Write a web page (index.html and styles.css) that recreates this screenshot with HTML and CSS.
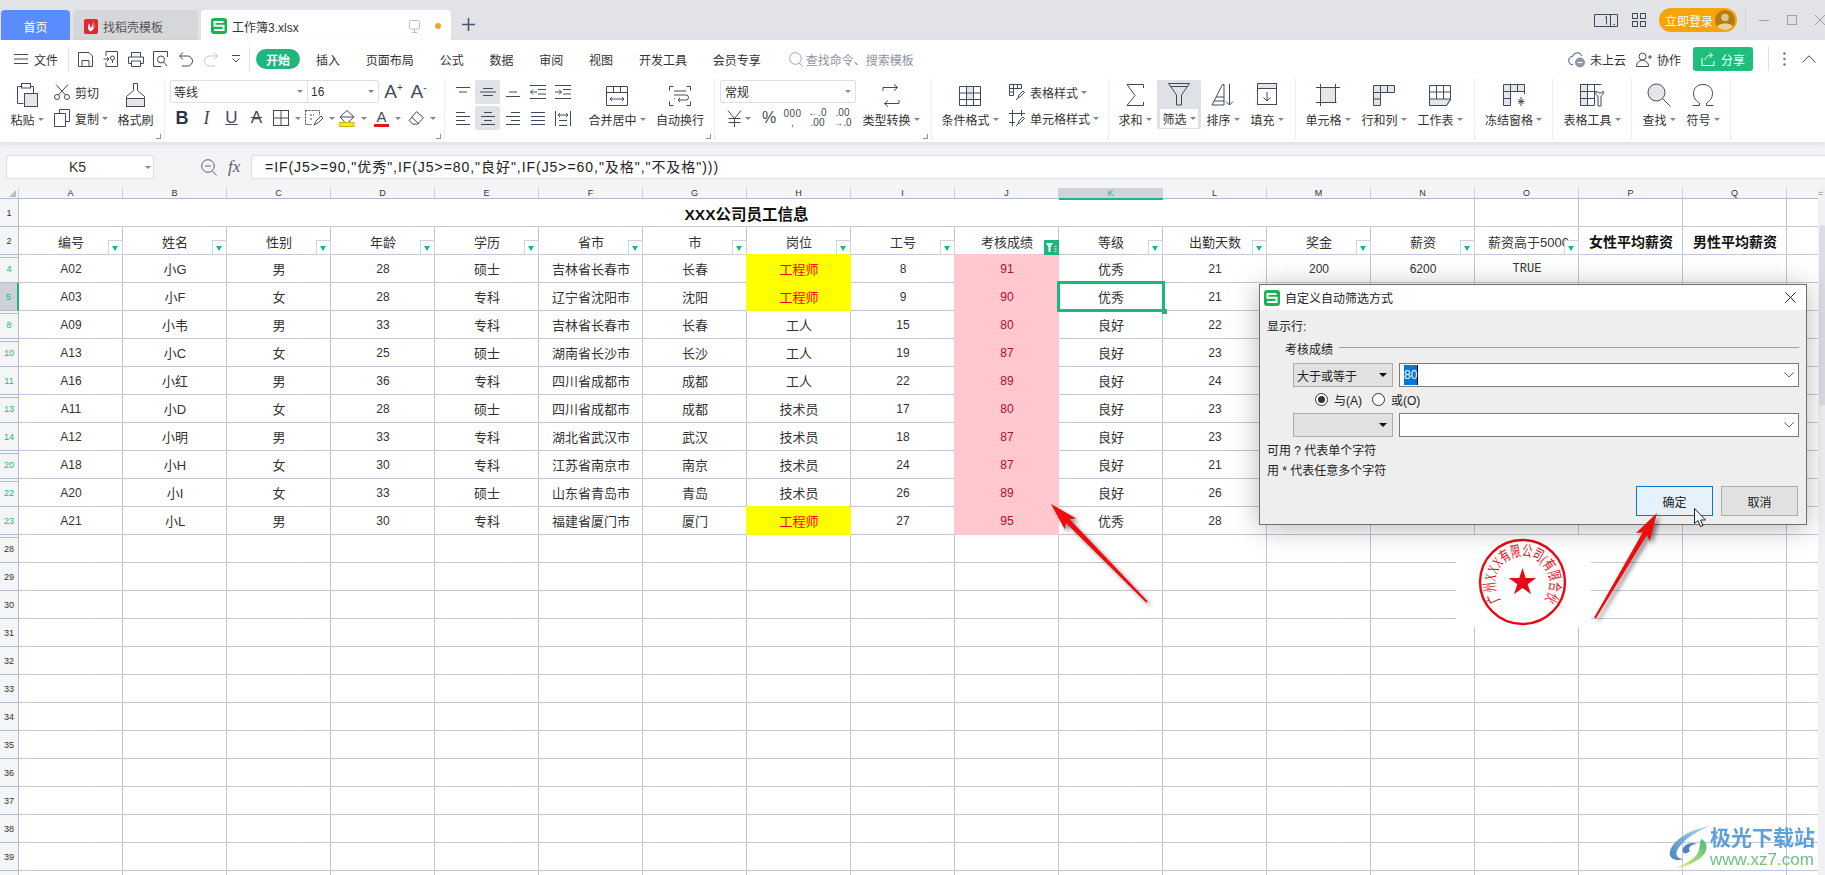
FILE: index.html
```html
<!DOCTYPE html>
<html lang="zh-CN">
<head>
<meta charset="utf-8">
<title>工作簿3.xlsx</title>
<link rel="stylesheet" href="styles.css">
</head>
<body>
<div class="page">
<header class="tabbar">
  <div class="tab home">首页</div>
  <div class="tab doc">
    <svg width="14" height="15" viewBox="0 0 14 15"><rect width="14" height="15" rx="2" fill="#e5262c"/><path d="M9 2C9.5 5 8 7 6.5 9 6 6.5 6 6 5 4.5 3.500 7 3.500 11 6.500 12.500 9 11 11 8 11.500 5.500 10.500 7.500 9.500 8.500 8.500 9.500 9.500 7 10 4.500 9 2Z" fill="#fff"/></svg>
    <span>找稻壳模板</span>
  </div>
  <div class="tab cur">
    <svg width="16" height="16" viewBox="0 0 16 16"><rect width="16" height="16" rx="3" fill="#17b451"/><path d="M12.500 4H3.500V7.800H12.500V12H3" fill="none" stroke="#fff" stroke-width="2"/></svg>
    <span class="curname">工作簿3.xlsx</span>
    <svg class="mon" width="11" height="13" viewBox="0 0 11 13"><rect x=".5" y=".5" width="10" height="8.500" rx="1" fill="none" stroke="#b9bdc6"/><path d="M5.500 9v3M3 12.500h5" stroke="#b9bdc6" fill="none"/></svg>
    <i class="dot"></i>
  </div>
  <svg class="plus" width="13" height="13" viewBox="0 0 13 13"><path d="M6.500 0v13M0 6.500h13" stroke="#4d5670" stroke-width="1.600"/></svg>
  <div class="winbar">
    <svg class="ic" width="24" height="13" viewBox="0 0 24 13"><path d="M23.500 .5H.5v12h23zM16.500 .5v12"/><path d="M11 3.500l1.500-1v8M19.500 10.500h1.500" stroke-width="1"/></svg>
    <svg class="ic gridi" width="14" height="14" viewBox="0 0 14 14"><rect x=".5" y=".5" width="5" height="5"/><rect x="8.500" y=".5" width="5" height="5"/><rect x=".5" y="8.500" width="5" height="5"/><rect x="8.500" y="8.500" width="5" height="5"/></svg>
    <div class="login"><span>立即登录</span>
      <svg width="20" height="20" viewBox="0 0 20 20"><circle cx="10" cy="10" r="10" fill="#b47c12"/><circle cx="10" cy="7.500" r="3.800" fill="#e0c48c"/><path d="M2.500 16.500C4 12.500 16 12.500 17.500 16.500 14 21 6 21 2.500 16.500Z" fill="#e8d3a6"/></svg>
    </div>
    <i class="wsep"></i>
    <svg class="win w1" width="10" height="10" viewBox="0 0 10 10"><path d="M0 5.500h10"/></svg>
    <svg class="win w2" width="10" height="10" viewBox="0 0 10 10"><rect x=".5" y=".5" width="9" height="9"/></svg>
    <svg class="win w3" width="10" height="10" viewBox="0 0 10 10"><path d="M0 0l10 10M10 0L0 10"/></svg>
  </div>
</header>

<section class="ribbon">
  <nav class="menu">
    <svg class="ic ham" width="14" height="10" viewBox="0 0 14 10"><path d="M0 .5h14M0 5h14M0 9.500h14"/></svg>
    <span class="file">文件</span>
    <i class="msep first"></i>
    <div class="qb"><svg class="ic" width="15" height="15" viewBox="0 0 15 15"><path d="M.5.5H11l3.500 3.500v10.500H.5zM4 14.500V8.500h7v6"/></svg></div>
    <div class="qb"><svg class="ic" width="15" height="16" viewBox="0 0 15 16"><path d="M3 .5h11.500v15H3v-4M3 5V.5M.5 8H6M4 6l2 2-2 2"/><circle cx="9.500" cy="7" r="2"/><path d="M9.500 9v3"/></svg></div>
    <div class="qb"><svg class="ic" width="16" height="15" viewBox="0 0 16 15"><path d="M3.500 5V.5h9V5M3.500 11.500h-3V5h15v6.500h-3M3.500 9h9v5.500h-9z"/></svg></div>
    <div class="qb"><svg class="ic" width="15" height="16" viewBox="0 0 15 16"><path d="M14.500 6V.5H.5v15h8"/><circle cx="8" cy="8.500" r="3.500"/><path d="M10.500 11l3.500 4"/></svg></div>
    <div class="qb"><svg class="ic" width="14" height="15" viewBox="0 0 14 15"><path d="M4 .5L.5 4 4 7.500M.5 4h8a5 5 0 010 10H3"/></svg></div>
    <div class="qb"><svg class="ic off" width="14" height="15" viewBox="0 0 14 15"><path d="M10 .5L13.500 4 10 7.500M13.500 4h-8a5 5 0 000 10H11"/></svg></div>
    <div class="qb"><svg class="ic" width="8" height="8" viewBox="0 0 8 8"><path d="M0 .5h8M.5 3.500L4 7l3.500-3.500"/></svg></div>
    <i class="msep second"></i>
    <div class="pill">开始</div>
    <div class="navs">
      <span>插入</span><span>页面布局</span><span>公式</span><span>数据</span><span>审阅</span><span>视图</span><span>开发工具</span><span>会员专享</span>
    </div>
    <svg class="ic search" width="14" height="15" viewBox="0 0 14 15"><circle cx="6.500" cy="6.500" r="5.800"/><path d="M10.500 11l3 3.500"/></svg>
    <span class="searchtxt">查找命令、搜索模板</span>
    <div class="mright">
      <svg width="18" height="17" viewBox="0 0 18 17"><path d="M5 13.500A4 4 0 014.500 5.500 5 5 0 0114 5" fill="none" stroke="#4a5366"/><circle cx="12" cy="11.500" r="5" fill="#8f96a6"/><path d="M9.500 11.500h5" stroke="#fff" stroke-width="1.200"/></svg>
      <span class="mtxt">未上云</span>
      <svg class="ic pers" width="16" height="15" viewBox="0 0 16 15"><circle cx="6.500" cy="4.500" r="3.500"/><path d="M.5 14.500c0-4 2.500-6 6-6s6 2 6 6zM12 5h4M14 3v4"/></svg>
      <span class="mtxt mt2">协作</span>
      <div class="share"><svg width="14" height="14" viewBox="0 0 14 14"><path d="M1 6v7.500h12V9M4 8c1-4 4-5 7-5M8.500 .5L11.500 3 8.500 6" fill="none" stroke="#fff"/></svg><span>分享</span></div>
      <i class="msep third"></i>
      <svg class="dots" width="3" height="14" viewBox="0 0 3 14"><circle cx="1.500" cy="1.500" r="1.200"/><circle cx="1.500" cy="7" r="1.200"/><circle cx="1.500" cy="12.500" r="1.200"/></svg>
      <svg class="ic chev" width="14" height="8" viewBox="0 0 14 8"><path d="M.5 7.500L7 .8l6.500 6.700"/></svg>
    </div>
  </nav>

  <div class="tools">
    <div class="grp g1">
      <div class="big w54">
        <svg class="ic" width="22" height="24" viewBox="0 0 22 24"><path d="M6.500 3.500h-5v17h6M14.500 3.500h3v7"/><rect x="5.500" y=".5" width="9" height="4.500"/><rect x="8.500" y="10.500" width="13" height="13" class="shade"/></svg>
        <span class="lb">粘贴<i class="car"></i></span>
      </div>
      <div class="stack w56">
        <div class="mini"><svg class="ic" width="16" height="16" viewBox="0 0 16 16"><circle cx="3" cy="13" r="2.500"/><circle cx="13" cy="13" r="2.500"/><path d="M4.500 11L14 .5M11.500 11L2 .5"/></svg><span>剪切</span></div>
        <div class="mini"><svg class="ic" width="16" height="18" viewBox="0 0 16 18"><path d="M5.500 4.500V.5h10v12h-4"/><path d="M.5 4.500h11v13H.5z"/></svg><span>复制<i class="car"></i></span></div>
      </div>
      <div class="big w51">
        <svg class="ic" width="19" height="24" viewBox="0 0 19 24"><path d="M7.500.5h4v7l7 6v10H.5v-10l7-6z"/><rect x=".5" y="15.500" width="18" height="8" class="shade"/></svg>
        <span class="lb">格式刷</span>
      </div>
      <i class="corner"></i>
    </div>

    <div class="grp g2">
      <div class="rows">
        <div class="row1">
          <div class="combo fontbox">
            <div class="seg fname"><span>等线</span><i class="car"></i></div>
            <div class="seg fsize"><span>16</span><i class="car"></i></div>
          </div>
          <span class="az">A<sup>+</sup></span><span class="az">A<sup>-</sup></span>
        </div>
        <div class="row2">
          <span class="fb f24 b">B</span>
          <span class="fb f25 it">I</span>
          <span class="fb f25 un">U</span>
          <span class="fb f25 st">A</span>
          <span class="fb f35"><svg class="ic" width="16" height="16" viewBox="0 0 16 16"><rect x=".5" y=".5" width="15" height="15"/><path d="M8 .5v15M.5 8h15"/></svg><i class="car"></i></span>
          <span class="fb f32"><svg class="ic" width="18" height="17" viewBox="0 0 18 17"><path d="M.5.5h14v5M.5.5v14h7M5 5h4M5 9h3" stroke-dasharray="2 1"/><path d="M9 15l2-4 5-5 2 2-5 5z"/></svg><i class="car"></i></span>
          <span class="fb f34"><svg width="16" height="17" viewBox="0 0 16 17"><path d="M8 .5L1 7l5 5.500h3L15 7zM2 7h12" fill="none" stroke="#404859"/><rect x="0" y="12.500" width="15" height="4" fill="#f8e71c" stroke="#c9b90a"/></svg><i class="car"></i></span>
          <span class="fb f35"><span class="ared">A</span><i class="car"></i></span>
          <span class="fb f33"><svg class="ic" width="16" height="14" viewBox="0 0 16 14"><path d="M8.500.7l7 6-6 6.500H5L1 9.500zM4 6.500l7 6.500"/></svg><i class="car"></i></span>
        </div>
      </div>
      <i class="corner"></i>
    </div>

    <div class="grp g3">
      <div class="agrid">
        <span class="ac"><svg class="ic" width="14" height="10" viewBox="0 0 14 10"><path d="M0 .5h14M3 5h8"/></svg></span>
        <span class="ac on"><svg class="ic" width="16" height="10" viewBox="0 0 16 10"><path d="M3 1.500h10M0 5h16M3 8.500h10"/></svg></span>
        <span class="ac"><svg class="ic" width="14" height="10" viewBox="0 0 14 10"><path d="M3 5h8M0 9.500h14"/></svg></span>
        <span class="ac"><svg class="ic" width="16" height="14" viewBox="0 0 16 14"><path d="M0 .5h16M8 4.500h8M8 9h8M0 13.500h16M.5 7H7M3 4.500L.5 7 3 9.500"/></svg></span>
        <span class="ac"><svg class="ic" width="16" height="14" viewBox="0 0 16 14"><path d="M0 .5h16M0 13.500h16M8 4.500h8M8 9h8M0 7h6.500M4 4.500L6.500 7 4 9.500"/></svg></span>
        <span class="ac"><svg class="ic" width="14" height="13" viewBox="0 0 14 13"><path d="M0 .5h9M0 4.500h14M0 8.500h9M0 12.500h14"/></svg></span>
        <span class="ac on"><svg class="ic" width="14" height="13" viewBox="0 0 14 13"><path d="M3 .5h8M0 4.500h14M3 8.500h8M0 12.500h14"/></svg></span>
        <span class="ac"><svg class="ic" width="14" height="13" viewBox="0 0 14 13"><path d="M5 .5h9M0 4.500h14M5 8.500h9M0 12.500h14"/></svg></span>
        <span class="ac"><svg class="ic" width="14" height="13" viewBox="0 0 14 13"><path d="M0 .5h14M0 4.500h14M0 8.500h14M0 12.500h14"/></svg></span>
        <span class="ac"><svg class="ic" width="16" height="15" viewBox="0 0 16 15"><path d="M.5 0v15M15.500 0v15M4 14.500h8M4 9.500h8M3 4h10M5 2L3 4l2 2M11 2l2 2-2 2"/></svg></span>
      </div>
      <div class="big w66">
        <svg class="ic" width="22" height="24" viewBox="0 0 22 24"><path d="M.5 3.500h21v19H.5zM.5 9.500h21M7.500 3.500v6M14.500 3.500v6M4 16h14M6 14l-2 2 2 2M16 14l2 2-2 2"/></svg>
        <span class="lb">合并居中<i class="car"></i></span>
      </div>
      <div class="big w60">
        <svg class="ic" width="22" height="24" viewBox="0 0 22 24"><path d="M4.500 3.500H.5v4M17.500 3.500h4v4M4.500 22.500H.5v-4M17.500 22.500h4v-4M5 8h12M5 12h12a2.500 2.500 0 010 5H9M11 15l-2 2 2 2M5 16h1"/></svg>
        <span class="lb">自动换行</span>
      </div>
      <i class="corner"></i>
    </div>

    <div class="grp g4">
      <div class="rows nrows">
        <div class="row1"><div class="combo numbox"><span>常规</span><i class="car"></i></div></div>
        <div class="row2">
          <span class="nb n38"><svg class="ic yen" width="15" height="17" viewBox="0 0 15 17"><path d="M1 .5l6.500 8 6.500-8M7.500 8.500V17M1.500 8.500h12M1.500 12.500h12"/></svg><i class="car"></i></span>
          <span class="nb n22 pct">%</span>
          <span class="nb n25 thou">000<br>,</span>
          <span class="nb n25 dec">←.0<br>.00</span>
          <span class="nb n25 dec">.00<br>→.0</span>
        </div>
      </div>
      <div class="big w70">
        <svg class="ic" width="20" height="24" viewBox="0 0 20 24"><path d="M2 8V4.500h14M13 1.500l3.500 3-3.500 3M18 17v3.500H4M7 17.500l-3.500 3 3.500 3"/></svg>
        <span class="lb">类型转换<i class="car"></i></span>
      </div>
      <i class="corner"></i>
    </div>

    <div class="grp g5">
      <div class="big w68">
        <svg class="ic" width="22" height="24" viewBox="0 0 22 24"><rect x="8" y="3.500" width="7" height="14" class="shade nost"/><path d="M.5 3.500h21v19H.5zM.5 10h21M.5 16.500h21M7.500 3.500v19M14.500 3.500v19"/></svg>
        <span class="lb">条件格式<i class="car"></i></span>
      </div>
      <div class="stack sty">
        <div class="mini"><svg class="ic" width="16" height="17" viewBox="0 0 16 17"><path d="M.5.5h12v4H4.500v7H.5zM.5 4.500h4M.5 8h4M4.500.5v4M8.500.5v4M9 14l1-3 4-4 1.500 1.500-4 4zM7 16l2-2"/></svg><span>表格样式<i class="car"></i></span></div>
        <div class="mini"><svg class="ic" width="16" height="17" viewBox="0 0 16 17"><path d="M3.500 0v16M12.500 0v6M0 3.500h16M0 12.500h6M9 14l1-3 4-4 1.500 1.500-4 4zM7 16l2-2"/></svg><span>单元格样式<i class="car"></i></span></div>
      </div>
    </div>

    <div class="grp g6">
      <div class="big w44">
        <svg class="ic" width="18" height="24" viewBox="0 0 18 24"><path d="M17.500 5V1.500H1l8 11-8 10h16.500V19"/></svg>
        <span class="lb">求和<i class="car"></i></span>
      </div>
      <div class="big w44 act">
        <svg class="ic" width="22" height="24" viewBox="0 0 22 24"><path d="M.5 1.500h21L13.500 13v10h-5V13zM3 4.500h16"/></svg>
        <span class="lb">筛选<i class="car"></i></span>
      </div>
      <div class="big w44">
        <svg class="ic" width="24" height="24" viewBox="0 0 24 24"><path d="M1 22L11.500 1.500h1.500v20.500zM5 14h8M3 18h10M18.500 1v21M15 18.500l3.500 3.500 3.500-3.500"/></svg>
        <span class="lb">排序<i class="car"></i></span>
      </div>
      <div class="big w44">
        <svg class="ic" width="20" height="24" viewBox="0 0 20 24"><rect x=".5" y=".5" width="19" height="21"/><rect x=".5" y=".5" width="19" height="5" class="shade"/><path d="M10 9v9M6.500 14.500L10 18l3.500-3.500"/></svg>
        <span class="lb">填充<i class="car"></i></span>
      </div>
    </div>

    <div class="grp g7">
      <div class="big w56">
        <svg class="ic" width="24" height="24" viewBox="0 0 24 24"><rect x="4.500" y="4.500" width="15" height="15" class="shade"/><path d="M4.500 1v22M19.500 1v3M0 4.500h24M0 19.500h4M19 19.500h1.500" /></svg>
        <span class="lb">单元格<i class="car"></i></span>
      </div>
      <div class="big w56">
        <svg class="ic" width="22" height="24" viewBox="0 0 22 24"><path class="shade" d="M.5 2.500h21v7H7.500v13H.5z"/><path d="M.5 9.500h7M.5 16h7M7.500 2.500v7M14.500 2.500v7"/></svg>
        <span class="lb">行和列<i class="car"></i></span>
      </div>
      <div class="big w56">
        <svg class="ic" width="22" height="24" viewBox="0 0 22 24"><path d="M.5 2.500h21v14l-4 6H.5zM.5 9h21M7.500 2.500V16M14.500 2.500V16"/><path class="shade" d="M.5 16h21l-4 6.500H.5z"/></svg>
        <span class="lb">工作表<i class="car"></i></span>
      </div>
    </div>

    <div class="grp g8">
      <div class="big w78">
        <svg class="ic" width="22" height="24" viewBox="0 0 22 24"><path class="shade" d="M.5 1.500h21v7H7.500v14H.5z"/><path d="M.5 8.500h21M.5 15.500h7M7.500 1.500v21M14.500 1.500v7M21.500 8v3M15 18.500h6.500M18 14v9M15.500 16l5 5M20.500 16l-5 5"/></svg>
        <span class="lb">冻结窗格<i class="car"></i></span>
      </div>
    </div>

    <div class="grp g9">
      <div class="big w79">
        <svg class="ic" width="24" height="24" viewBox="0 0 24 24"><path class="shade" d="M.5 1.500h7v21H.5z"/><path d="M.5 1.500h21M.5 22.500H14M.5 1.500v21M.5 8.500h14M.5 15.500h14M7.500 1.500v21M14.500 1.500v21"/><path d="M16 8c-1 3 1 5 2 5v10h3V13c1 0 3-2 2-5l-1.500 2h-2.500z" fill="#fff"/></svg>
        <span class="lb">表格工具<i class="car"></i></span>
      </div>
    </div>

    <div class="grp g10">
      <div class="big w44">
        <svg class="ic" width="24" height="24" viewBox="0 0 24 24"><circle cx="9.500" cy="9.500" r="8.500" class="shade"/><path d="M15.500 15.500l8 8"/></svg>
        <span class="lb">查找<i class="car"></i></span>
      </div>
      <div class="big w44">
        <svg class="ic" width="22" height="24" viewBox="0 0 22 24"><path d="M.5 22.500h7V20C4 18 1.500 14.500 1.500 10.500 1.500 5 5.500 1.500 11 1.500S20.500 5 20.500 10.500c0 4-2.500 7.500-6 9.500v2.500h7"/></svg>
        <span class="lb">符号<i class="car"></i></span>
      </div>
    </div>
  </div>
</section>

<section class="fbar">
  <div class="namebox"><span>K5</span><i class="car"></i></div>
  <svg class="ic fzoom" width="16" height="17" viewBox="0 0 16 17"><circle cx="7" cy="7" r="6.300"/><path d="M4 7h6M11.500 12l4 4.500"/></svg>
  <span class="fx">fx</span>
  <div class="finput">=IF(J5&gt;=90,"优秀",IF(J5&gt;=80,"良好",IF(J5&gt;=60,"及格","不及格")))</div>
</section>

<section class="sheet">
  <div class="grid">
    <div class="colhead">
      <div class="corner-cell"><i></i></div>
      <div class="ch">A</div><div class="ch">B</div><div class="ch">C</div><div class="ch">D</div><div class="ch">E</div><div class="ch">F</div><div class="ch">G</div><div class="ch">H</div><div class="ch">I</div><div class="ch">J</div><div class="ch cursel">K</div><div class="ch">L</div><div class="ch">M</div><div class="ch">N</div><div class="ch">O</div><div class="ch">P</div><div class="ch">Q</div>
    </div>
    <div class="row"><div class="rh">1</div><div class="merged">XXX公司员工信息</div></div>
    <div class="row hdr"><div class="rh">2</div>
      <div class="c">编号<i class="fl"></i></div><div class="c">姓名<i class="fl"></i></div><div class="c">性别<i class="fl"></i></div><div class="c">年龄<i class="fl"></i></div><div class="c">学历<i class="fl"></i></div><div class="c">省市<i class="fl"></i></div><div class="c">市<i class="fl"></i></div><div class="c">岗位<i class="fl"></i></div><div class="c">工号<i class="fl"></i></div>
      <div class="c">考核成绩<i class="fla"><svg width="15" height="15" viewBox="0 0 15 15"><path d="M2 3h7L6.500 7v5h-2V7z" fill="#fff"/><path d="M10.500 6.500h2M10.500 9h2M10.500 11.500h2" stroke="#fff"/></svg></i></div>
      <div class="c">等级<i class="fl"></i></div><div class="c">出勤天数<i class="fl"></i></div><div class="c">奖金<i class="fl"></i></div><div class="c">薪资<i class="fl"></i></div>
      <div class="c clip"><span>薪资高于5000</span><i class="fl"></i></div><div class="c bold">女性平均薪资</div><div class="c bold">男性平均薪资</div>
    </div>
    <div class="row"><div class="rh hit hid">4</div><div class="c">A02</div><div class="c">小G</div><div class="c">男</div><div class="c">28</div><div class="c">硕士</div><div class="c">吉林省长春市</div><div class="c">长春</div><div class="c yel">工程师</div><div class="c">8</div><div class="c pink">91</div><div class="c">优秀</div><div class="c">21</div><div class="c">200</div><div class="c">6200</div><div class="c mono">TRUE</div></div>
    <div class="row"><div class="rh hit cursel">5</div><div class="c">A03</div><div class="c">小F</div><div class="c">女</div><div class="c">28</div><div class="c">专科</div><div class="c">辽宁省沈阳市</div><div class="c">沈阳</div><div class="c yel">工程师</div><div class="c">9</div><div class="c pink">90</div><div class="c active">优秀<i class="sel"><i class="handle"></i></i></div><div class="c">21</div></div>
    <div class="row"><div class="rh hit hid">8</div><div class="c">A09</div><div class="c">小韦</div><div class="c">男</div><div class="c">33</div><div class="c">专科</div><div class="c">吉林省长春市</div><div class="c">长春</div><div class="c">工人</div><div class="c">15</div><div class="c pink">80</div><div class="c">良好</div><div class="c">22</div></div>
    <div class="row"><div class="rh hit hid">10</div><div class="c">A13</div><div class="c">小C</div><div class="c">女</div><div class="c">25</div><div class="c">硕士</div><div class="c">湖南省长沙市</div><div class="c">长沙</div><div class="c">工人</div><div class="c">19</div><div class="c pink">87</div><div class="c">良好</div><div class="c">23</div></div>
    <div class="row"><div class="rh hit">11</div><div class="c">A16</div><div class="c">小红</div><div class="c">男</div><div class="c">36</div><div class="c">专科</div><div class="c">四川省成都市</div><div class="c">成都</div><div class="c">工人</div><div class="c">22</div><div class="c pink">89</div><div class="c">良好</div><div class="c">24</div></div>
    <div class="row"><div class="rh hit hid">13</div><div class="c">A11</div><div class="c">小D</div><div class="c">女</div><div class="c">28</div><div class="c">硕士</div><div class="c">四川省成都市</div><div class="c">成都</div><div class="c">技术员</div><div class="c">17</div><div class="c pink">80</div><div class="c">良好</div><div class="c">23</div></div>
    <div class="row"><div class="rh hit">14</div><div class="c">A12</div><div class="c">小明</div><div class="c">男</div><div class="c">33</div><div class="c">专科</div><div class="c">湖北省武汉市</div><div class="c">武汉</div><div class="c">技术员</div><div class="c">18</div><div class="c pink">87</div><div class="c">良好</div><div class="c">23</div></div>
    <div class="row"><div class="rh hit hid">20</div><div class="c">A18</div><div class="c">小H</div><div class="c">女</div><div class="c">30</div><div class="c">专科</div><div class="c">江苏省南京市</div><div class="c">南京</div><div class="c">技术员</div><div class="c">24</div><div class="c pink">87</div><div class="c">良好</div><div class="c">21</div></div>
    <div class="row"><div class="rh hit hid">22</div><div class="c">A20</div><div class="c">小I</div><div class="c">女</div><div class="c">33</div><div class="c">硕士</div><div class="c">山东省青岛市</div><div class="c">青岛</div><div class="c">技术员</div><div class="c">26</div><div class="c pink">89</div><div class="c">良好</div><div class="c">26</div></div>
    <div class="row"><div class="rh hit">23</div><div class="c">A21</div><div class="c">小L</div><div class="c">男</div><div class="c">30</div><div class="c">专科</div><div class="c">福建省厦门市</div><div class="c">厦门</div><div class="c yel">工程师</div><div class="c">27</div><div class="c pink">95</div><div class="c">优秀</div><div class="c">28</div><div class="c">200</div><div class="c">10100</div><div class="c mono">TRUE</div></div>
    <div class="row"><div class="rh hid">28</div></div>
    <div class="row"><div class="rh">29</div></div>
    <div class="row"><div class="rh">30</div></div>
    <div class="row"><div class="rh">31</div></div>
    <div class="row"><div class="rh">32</div></div>
    <div class="row"><div class="rh">33</div></div>
    <div class="row"><div class="rh">34</div></div>
    <div class="row"><div class="rh">35</div></div>
    <div class="row"><div class="rh">36</div></div>
    <div class="row"><div class="rh">37</div></div>
    <div class="row"><div class="rh">38</div></div>
    <div class="row"><div class="rh">39</div></div>
    <div class="row"><div class="rh"></div></div>
  </div>
  <div class="vscroll"><span class="eq">=</span><i class="thumb"></i></div>
</section>

<div class="stamp">
  <svg width="135" height="92" viewBox="0 0 135 92">
    <defs><path id="arc" d="M44.500 65A27.500 27.500 0 1 1 88.500 65"/></defs>
    <ellipse cx="66.500" cy="47" rx="42.500" ry="42" fill="none" stroke="#e60a14" stroke-width="2.400"/>
    <polygon points="66.500,33 69.700,43 80.300,43 71.700,49.200 75,59.200 66.500,53 58,59.200 61.300,49.200 52.700,43 63.300,43" fill="#e60a14"/>
    <text class="stamptxt"><textPath href="#arc" textLength="124" lengthAdjust="spacingAndGlyphs">广州XXX有限公司(有限合伙)</textPath></text>
  </svg>
</div>

<aside class="dialog">
  <div class="dtitle">
    <svg width="16" height="16" viewBox="0 0 16 16"><rect width="16" height="16" rx="3" fill="#17b451"/><path d="M12.500 4H3.500V7.800H12.500V12H3" fill="none" stroke="#fff" stroke-width="2"/></svg>
    <span>自定义自动筛选方式</span>
    <svg class="dclose" width="11" height="11" viewBox="0 0 11 11"><path d="M.5.5l10 10M10.500.5l-10 10" stroke="#222" fill="none"/></svg>
  </div>
  <div class="dbody">
    <div class="dline">显示行:</div>
    <div class="legend"><span>考核成绩</span><i></i></div>
    <div class="frow">
      <div class="dsel"><span>大于或等于</span><i class="tri"></i></div>
      <div class="dinp"><span class="selected">80</span><svg class="dchev" width="10" height="6" viewBox="0 0 10 6"><path d="M.5.5L5 5 9.500.5" fill="none" stroke="#666"/></svg></div>
    </div>
    <div class="radios">
      <i class="radio on"></i><span>与(A)</span>
      <i class="radio"></i><span>或(O)</span>
    </div>
    <div class="frow r2">
      <div class="dsel"><span></span><i class="tri"></i></div>
      <div class="dinp"><span></span><svg class="dchev" width="10" height="6" viewBox="0 0 10 6"><path d="M.5.5L5 5 9.500.5" fill="none" stroke="#666"/></svg></div>
    </div>
    <div class="dline n1">可用 ? 代表单个字符</div>
    <div class="dline n2">用 * 代表任意多个字符</div>
    <div class="btns"><div class="btn ok">确定</div><div class="btn">取消</div></div>
  </div>
</aside>

<svg class="arrows" width="1825" height="875" viewBox="0 0 1825 875">
  <polygon points="1051,504 1064.900,529.600 1066,522.900 1146.300,602.700 1147.700,601.300 1069.600,519.300 1076.300,518.400" fill="#ee0d0d"/>
  <polygon points="1657,513 1649.700,541.200 1647,535 1595.900,618.500 1594.100,617.500 1642.600,532.400 1635.900,533" fill="#ee0d0d"/>
</svg>

<svg class="pointer" width="13" height="19" viewBox="0 0 13 19"><path d="M.5.5v15l3.500-3 2.500 6 2.500-1-2.500-5.500h5z" fill="#fff" stroke="#222"/></svg>

<div class="wm">
  <svg width="43" height="44" viewBox="0 0 43 44">
    <defs>
      <linearGradient id="wb" x1="1" y1="0" x2="0" y2="1"><stop offset="0" stop-color="#a5dcf5"/><stop offset="1" stop-color="#3b74bd"/></linearGradient>
      <linearGradient id="wg" x1="1" y1="0" x2="0" y2="1"><stop offset="0" stop-color="#32b56a"/><stop offset="1" stop-color="#f1ec7a"/></linearGradient>
    </defs>
    <path d="M42 1C23 4 6 14 2 26 0 34 8 37 16 34 8 34 6 28 12 21 19 12 30 6 42 1Z" fill="url(#wb)"/>
    <path d="M15 27C13 21 22 16 29 19 23 19 19 23 22 26 19 29 16 29 15 27Z" fill="#3b74bd"/>
    <path d="M33 14C42 18 40 30 28 36 22 40 14 42 8 44 16 38 30 34 31 24 32 20 32 17 33 14Z" fill="url(#wg)"/>
  </svg>
  <div class="wmt"><b>极光下载站</b><span>www.xz7.com</span></div>
</div>
</div>
</body>
</html>
```
FILE: styles.css
```css
* { box-sizing: border-box; }
html, body { margin: 0; padding: 0; }
body { font-family: "Liberation Sans", "Noto Sans CJK SC", sans-serif; font-size: 12px; color: #333; background: #fff; }
i { font-style: normal; display: block; }
.page { position: relative; width: 1825px; height: 875px; overflow: hidden; display: flex; flex-direction: column; }
.ic { fill: none; stroke: #414a5c; stroke-width: 1; flex: none; display: block; }
.ic.off { stroke: #c3c7cf; }
.shade { fill: #e4e6ea; }
.nost { stroke: none; }
svg { flex: none; }

/* tab bar */
.tabbar { height: 40px; background: #e2e3e7; display: flex; align-items: flex-end; padding-left: 1px; }
.tab { height: 30px; border-radius: 4px 4px 0 0; display: flex; align-items: center; padding-top: 2px; }
.home { width: 69px; background: #5b8cff; color: #fff; justify-content: center; }
.doc { width: 125px; margin-left: 3px; background: #d6d7da; padding-left: 11px; gap: 5px; color: #555; }
.cur { width: 250px; margin-left: 3px; background: #fff; padding-left: 10px; gap: 5px; color: #333; }
.curname { width: 172px; }
.mon { margin-left: 0; }
.dot { width: 6px; height: 6px; border-radius: 50%; background: #f5a623; margin-left: 10px; }
.plus { margin: 0 0 9px 11px; }
.winbar { margin-left: auto; height: 40px; align-self: flex-start; display: flex; align-items: center; width: 231px; }
.gridi { margin-left: 14px; }
.login { width: 80px; height: 24px; margin-left: 13px; border-radius: 12px; background: #f5a50a; color: #fff; display: flex; align-items: center; justify-content: space-between; padding: 0 2px 0 6px; font-size: 12px; }
.wsep { width: 1px; height: 24px; background: #d0d1d6; margin-left: 8px; }
.win { fill: none; stroke: #9aa0ad; }
.w1 { margin-left: 13px; }
.w2 { margin-left: 18px; }
.w3 { margin-left: 18px; }

/* ribbon */
.ribbon { height: 102px; background: #fff; position: relative; z-index: 2; box-shadow: 0 2px 5px rgba(60, 70, 90, .13); }
.menu { height: 38px; display: flex; align-items: center; padding-left: 14px; }
.file { margin-left: 6px; width: 24px; }
.msep { width: 1px; height: 24px; background: #dcdfe4; }
.msep.first { margin: 0 4px 0 10px; }
.msep.second { margin: 0 6px 0 1px; }
.msep.third { margin: 0 14px 0 15px; }
.qb { width: 25px; display: flex; justify-content: center; }
.pill { width: 44px; height: 20px; border-radius: 10px; background: #1fb67e; color: #fff; font-weight: 700; display: flex; align-items: center; justify-content: center; }
.navs { display: flex; gap: 25.8px; margin-left: 16px; }
.search { margin-left: 28px; stroke: #a0a6b2; }
.searchtxt { margin-left: 3px; color: #8d93a1; }
.mright { margin-left: auto; display: flex; align-items: center; width: 257px; }
.mtxt { margin-left: 4px; }
.pers { margin-left: 10px; }
.mt2 { margin-left: 5px; }
.share { width: 60px; height: 24px; margin-left: 12px; background: #1fbe7c; border-radius: 3px; color: #fff; display: flex; align-items: center; justify-content: center; gap: 6px; }
.dots { fill: #6a7284; }
.chev { margin-left: 16px; }

.tools { height: 64px; display: flex; }
.grp { position: relative; display: flex; height: 62px; border-right: 1px solid #eceef1; }
.g1 { width: 165px; }
.g2 { width: 280px; }
.g3 { width: 270px; }
.g4 { width: 217px; }
.g5 { width: 177px; padding-left: 4px; }
.g6 { width: 187px; padding-left: 4px; }
.g7 { width: 179px; padding-left: 4px; }
.g8 { width: 78px; }
.g9 { width: 79px; }
.g10 { width: 99px; padding-left: 5px; }
.corner { position: absolute; right: 3px; bottom: 1px; width: 5px; height: 5px; border-right: 1px solid #8b92a0; border-bottom: 1px solid #8b92a0; }

.big { display: flex; flex-direction: column; align-items: center; padding-top: 5px; }
.big .ic { height: 24px; }
.lb { display: flex; align-items: center; height: 16px; margin-top: 4px; white-space: nowrap; }
.w44 { width: 44px; }
.w51 { width: 51px; }
.w54 { width: 54px; }
.w56 { width: 56px; }
.w60 { width: 60px; }
.w66 { width: 66px; }
.w68 { width: 68px; }
.w70 { width: 70px; }
.w78 { width: 78px; }
.w79 { width: 79px; }
.car { width: 0; height: 0; border-left: 3px solid transparent; border-right: 3px solid transparent; border-top: 3px solid #808794; margin-left: 3px; }
.act { background: #dee1e6; height: 49px; padding-top: 2px; margin-top: 2px; border-radius: 2px; }
.act .lb { background: #fff; width: 38px; height: 19px; margin-top: 3px; justify-content: center; }
.stack { display: flex; flex-direction: column; gap: 2px; padding-top: 2px; }
.mini { height: 24px; display: flex; align-items: center; gap: 5px; white-space: nowrap; }
.mini span { display: flex; align-items: center; }
.sty .mini { padding-left: 5px; }

.rows { display: flex; flex-direction: column; gap: 3px; padding: 2px 0 0 5px; }
.row1 { height: 23px; display: flex; align-items: center; }
.row2 { height: 24px; display: flex; align-items: center; }
.combo { height: 23px; border: 1px solid #dcdfe4; border-radius: 2px; display: flex; align-items: center; }
.fontbox { width: 209px; margin-right: 2px; }
.seg { height: 100%; display: flex; align-items: center; justify-content: space-between; padding: 0 4px 0 3px; }
.fname { width: 137px; border-right: 1px solid #dcdfe4; }
.fsize { flex: 1; }
.az { width: 25px; font-size: 19px; text-align: center; color: #414a5c; line-height: 23px; }
.az sup { font-size: 10px; line-height: 0; vertical-align: 7px; }
.fb { display: flex; align-items: center; justify-content: center; height: 24px; color: #414a5c; }
.f24 { width: 24px; }
.f25 { width: 25px; }
.f32 { width: 32px; }
.f33 { width: 33px; }
.f34 { width: 34px; }
.f35 { width: 35px; }
.fb .car { margin-left: 6px; }
.b { font-size: 18px; font-weight: 700; color: #2c3447; }
.it { font-size: 18px; font-family: "Liberation Serif", serif; font-style: italic; }
.un { font-size: 17px; text-decoration: underline; }
.st { font-size: 17px; text-decoration: line-through; }
.ared { font-size: 15px; line-height: 15px; border-bottom: 3px solid #ef0f17; padding: 0 2px; }
.agrid { display: grid; grid-template-columns: repeat(5, 25px); grid-auto-rows: 24px; row-gap: 2px; padding: 2px 0 0 5px; margin-right: 9px; align-content: start; }
.ac { display: flex; align-items: center; justify-content: center; border-radius: 2px; }
.ac.on { background: #dfe3e7; }
.nrows { width: 141px; }
.numbox { width: 136px; justify-content: space-between; padding: 0 4px 0 4px; }
.nb { display: flex; align-items: center; justify-content: center; height: 24px; text-align: center; color: #414a5c; }
.n22 { width: 22px; }
.n25 { width: 25px; }
.n38 { width: 38px; }
.pct { font-size: 16px; }
.thou { font-size: 10px; line-height: 9px; letter-spacing: .4px; }
.dec { font-size: 10px; line-height: 10px; }

/* formula bar */
.fbar { height: 46px; background: #f3f4f6; display: flex; padding: 13px 0 0 6px; position: relative; }
.namebox { width: 148px; height: 24px; background: #fff; border: 1px solid #dcdfe4; border-radius: 2px; display: flex; align-items: center; font-size: 14px; padding: 0 2px 0 0; }
.namebox span { flex: 1; text-align: center; padding-left: 6px; }
.fzoom { margin: 4px 0 0 47px; stroke: #5a6273; }
.fx { width: 34px; padding-left: 11px; font-family: "Liberation Serif", serif; font-style: italic; font-size: 17px; line-height: 23px; color: #596173; }
.finput { flex: 1; height: 24px; background: #fff; border: 1px solid #dcdfe4; border-right: 0; border-radius: 2px 0 0 2px; padding-left: 13px; font-size: 14px; line-height: 22px; color: #222; letter-spacing: .95px; }

/* sheet */
.sheet { flex: 1; display: flex; min-height: 0; background: #fff; }
.grid { width: 1818px; overflow: hidden; }
.colhead { height: 11px; display: grid; grid-template-columns: 19px repeat(17, 104px) 31px; background: #f4f5f7; border-bottom: 1px solid #b3bbd0; }
.corner-cell { position: relative; border-right: 1px solid #d0d4dc; }
.corner-cell i { position: absolute; right: 2px; bottom: 1px; width: 0; height: 0; border-left: 7px solid transparent; border-bottom: 7px solid #b8bcc5; }
.ch { font-size: 9px; line-height: 10px; text-align: center; color: #333; border-right: 1px solid #ccd1db; }
.ch.cursel { background: #d0d3da; color: #1fb67e; box-shadow: 0 1px 0 #1fb67e, 0 2px 0 #1fb67e; position: relative; }

.row {
  display: grid;
  grid-template-columns: 19px repeat(17, 104px) 31px;
  height: 28px;
  background-color: #fff;
  background-image: linear-gradient(90deg, transparent 103px, #c0c7da 103px), linear-gradient(0deg, #c0c7da 1px, transparent 1px);
  background-size: 104px 100%, 100% 100%;
  background-position: 19px 0, 0 0;
  background-repeat: repeat-x, no-repeat;
}
.rh { position: relative; background: #f4f5f7; border-right: 1px solid #b3bbd0; border-bottom: 1px solid #b3bbd0; font-size: 9px; display: flex; align-items: center; justify-content: center; color: #333; }
.rh.hit { color: #1fb67e; }
.rh.hid::before { content: ""; position: absolute; left: 0; right: 0; top: 2px; height: 1px; background: #b3bbd0; }
.rh.cursel { background: #ced1d8; border-right: 2px solid #1fb67e; }
.merged { grid-column: 2 / span 14; display: flex; align-items: center; justify-content: center; background: #fff; border-right: 1px solid #c0c7da; border-bottom: 1px solid #c0c7da; font-size: 15.500px; font-weight: 700; color: #111; }
.c { position: relative; display: flex; align-items: center; justify-content: center; white-space: nowrap; color: #333; padding-bottom: 1px; font-size: 13px; }
.c:nth-child(2), .c:nth-child(5), .c:nth-child(10), .c:nth-child(11), .c:nth-child(13), .c:nth-child(14), .c:nth-child(15) { font-size: 12px; }
.hdr .c:nth-child(n) { padding-top: 1px; font-size: 13px; }
.clip { justify-content: flex-start; padding-left: 13px; }
.clip span { width: 88px; overflow: hidden; flex: none; }
.hdr .bold:nth-child(n) { font-weight: 700; font-size: 14px; color: #111; }
.mono { font-family: "Liberation Mono", monospace; font-size: 12px; }
.yel { background: #ff0; color: #f00; box-shadow: -1px -1px 0 #ff0; z-index: 1; }
.pink { background: #ffc7ce; color: #a8122a; box-shadow: -1px -1px 0 #ffc7ce; z-index: 1; }
.fl { position: absolute; right: 0; bottom: 0; width: 15px; height: 15px; background: #fff; border: 1px solid #cfd3da; }
.fl::after { content: ""; position: absolute; left: 3px; top: 5px; border-left: 3.500px solid transparent; border-right: 3.500px solid transparent; border-top: 5px solid #1fb67e; }
.fla { position: absolute; right: 0; bottom: 0; width: 15px; height: 15px; background: #1fb67e; z-index: 2; }
.fla svg { display: block; }
.sel { position: absolute; left: -2px; top: -2px; right: -2px; bottom: -1px; border: 3px solid #1fb67e; z-index: 3; }
.handle { position: absolute; right: -5px; bottom: -5px; width: 5px; height: 5px; background: #1fb67e; border: 0; }
.vscroll { position: relative; flex: 1; background: #f0f1f4; }
.eq { position: absolute; left: 0; top: 0; font-size: 9px; line-height: 11px; color: #777; }
.thumb { position: absolute; left: 1px; right: 0; top: 37px; height: 181px; background: #dadde3; border-radius: 2px; }

/* overlays */
.stamp { position: absolute; left: 1456px; top: 535px; width: 135px; height: 92px; background: #fff; z-index: 3; }
.stamp svg { display: block; }
.stamptxt { font-family: "Liberation Serif", "Noto Sans CJK SC", serif; font-size: 15px; fill: #e60a14; }
.dialog { position: absolute; left: 1259px; top: 284px; width: 548px; height: 241px; border: 1px solid #6f6f6f; background: #eee; box-shadow: 0 3px 26px rgba(0, 0, 0, .28); z-index: 4; display: flex; flex-direction: column; color: #222; }
.dtitle { height: 25px; background: #fff; display: flex; align-items: center; padding-left: 4px; gap: 5px; flex: none; }
.dclose { margin-left: auto; margin-right: 10px; }
.dbody { padding: 9px 7px 0 7px; }
.dline { height: 16px; line-height: 16px; }
.legend { height: 16px; margin: 5px 0 0 18px; display: flex; align-items: center; gap: 6px; }
.legend i { flex: 1; height: 1px; background: #a0a0a0; margin-top: -2px; }
.frow { height: 24px; margin: 7px 0 0 26px; display: flex; gap: 6px; }
.frow.r2 { margin-top: 6px; }
.dsel { width: 100px; background: #e1e1e1; border: 1px solid #adadad; display: flex; align-items: center; justify-content: space-between; padding: 0 5px 0 3px; }
.tri { width: 0; height: 0; border-left: 4px solid transparent; border-right: 4px solid transparent; border-top: 4px solid #111; }
.dinp { flex: 1; background: #fff; border: 1px solid #7a7a7a; display: flex; align-items: center; justify-content: space-between; padding: 0 4px 0 4px; }
.selected { background: #0078d7; color: #fff; width: 14px; line-height: 20px; display: block; border-right: 1px solid #000; }
.radios { height: 16px; margin: 4px 0 0 48px; display: flex; align-items: center; }
.radios span { margin: 0 10px 0 6px; }
.radio { width: 13px; height: 13px; border: 1px solid #333; border-radius: 50%; background: #fff; position: relative; }
.radio.on::after { content: ""; position: absolute; left: 2px; top: 2px; width: 7px; height: 7px; border-radius: 50%; background: #333; }
.n1 { margin-top: 6px; }
.n2 { margin-top: 4px; }
.btns { display: flex; justify-content: flex-end; gap: 8px; margin-top: 7px; padding-right: 1px; }
.btn { width: 77px; height: 30px; background: #e1e1e1; border: 1px solid #adadad; display: flex; align-items: center; justify-content: center; }
.btn.ok { background: #e5f1fb; border-color: #0078d7; }
.arrows { position: absolute; left: 0; top: 0; z-index: 6; pointer-events: none; filter: drop-shadow(3px 3px 2px rgba(0, 0, 0, .45)); }
.pointer { position: absolute; left: 1694px; top: 508px; z-index: 5; }
.wm { position: absolute; left: 1668px; top: 825px; display: flex; z-index: 3; opacity: .9; }
.wmt { display: flex; flex-direction: column; margin-left: -1px; }
.wmt b { font-size: 21px; line-height: 22px; color: #4c96d7; font-family: "Noto Sans CJK SC", sans-serif; }
.wmt span { font-size: 17px; line-height: 20px; margin-top: 3px; color: #5cbb78; }
```
